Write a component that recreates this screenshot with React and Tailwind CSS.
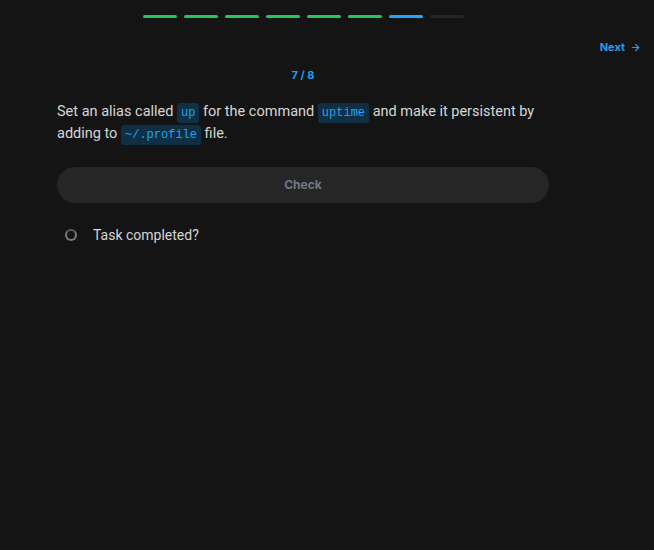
import React from "react";

const steps = ["done", "done", "done", "done", "done", "done", "current", "todo"];

function Code({ children }) {
  return (
    <code className="rounded-[3px] bg-[#0f3044] px-[4px] py-[3px] font-['Liberation_Mono',monospace] text-[12px] leading-none text-[#1ea2f5]">
      {children}
    </code>
  );
}

export default function App() {
  return (
    <div className="min-h-[550px] w-full bg-[#141414] font-['Roboto',sans-serif]">
      <div className="flex">
        {/* Main column */}
        <div className="ml-[57px] flex w-[492px] flex-col">
          <div className="mt-[15px] flex justify-center gap-[7px]">
            {steps.map((s, i) => (
              <div
                key={i}
                className={
                  "h-[3px] w-[34px] rounded-full " +
                  (s === "done" ? "bg-[#22c55e]" : s === "current" ? "bg-[#1ea7fd]" : "bg-[#262626]")
                }
              />
            ))}
          </div>

          <p className="mt-[49px] text-center font-['Inter',sans-serif] text-[11px] font-bold text-[#1e9ff2]">7 / 8</p>

          <p className="mt-[17px] text-[14.5px] leading-[22px] text-[#d6d6d6]">
            Set an alias called <Code>up</Code> for the command <Code>uptime</Code> and make it persistent by
            adding to <Code>~/.profile</Code> file.
          </p>

          <button className="mt-[22px] h-[36px] w-full rounded-full bg-[#262626] font-['Inter',sans-serif] text-[12px] font-bold text-[#737985]">
            Check
          </button>

          <label className="mt-[22px] flex items-center gap-[16px] pl-[8px]">
            <span className="h-[12px] w-[12px] rounded-full border-2 border-[#7a7a7a] border-t-[#5a5a5a]" />
            <span className="text-[14px] text-[#d6d6d6]">Task completed?</span>
          </label>
        </div>

        {/* Right */}
        <div className="flex flex-1 justify-end pr-[13px] pt-[40px]">
          <button className="flex h-[14px] items-center gap-[5px] font-['Inter',sans-serif] text-[11px] font-bold text-[#1e9ff2]">
            Next
            <svg width="11" height="11" viewBox="0 0 24 24" fill="none" stroke="currentColor" strokeWidth="2.5" strokeLinecap="round" strokeLinejoin="round">
              <path d="M5 12h14" />
              <path d="m12 5 7 7-7 7" />
            </svg>
          </button>
        </div>
      </div>
    </div>
  );
}
